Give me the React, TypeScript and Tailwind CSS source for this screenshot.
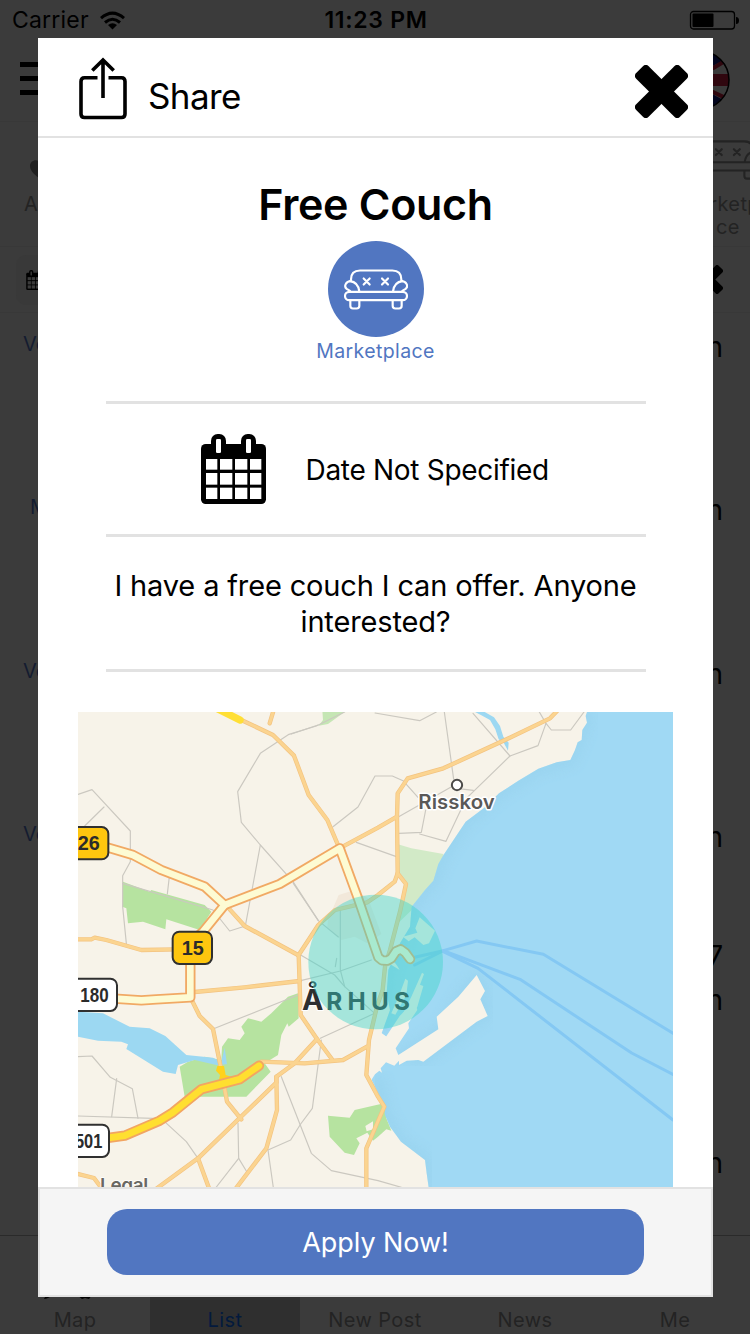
import React from "react";

const ROADS = [
  "490,30 585,75 648,137 692,255 748,330 782,410",
  "575,40 587,0",
  "790,412 900,353 957,320",
  "1440,0 1416,25 1281,90 1096,175 989,205 959,250 957,320 959,490 984,522 966,605 936,720 921,770 914,840 898,885 873,990 865,1095 900,1160 919,1190 895,1245 865,1315 865,1440",
  "959,490 950,515 900,555 868,577 771,600 721,645 662,735 668,915 717,987 762,1048",
  "455,598 500,648 660,735",
  "-5,688 40,688 50,683 85,690 190,720 300,718",
  "350,846 500,832 665,813",
  "340,868 365,918 405,957 430,1080 447,1175 490,1228",
  "550,1055 680,1060 795,1050 867,1010",
  "717,987 650,1060 595,1100 595,1118 360,1345 235,1436",
  "595,1100 597,1200 565,1315 470,1440",
  "360,1345 395,1440",
  "-5,1391 48,1404 75,1440",
];

const LANES = [
  "0,253 42,239 157,363 157,455 134,497 134,590 145,700",
  "78,291 20,348",
  "274,500 268,552",
  "134,520 405,600 455,663 502,648 547,405",
  "800,6 715,48 633,73 547,130 479,245 490,337 547,405 645,515 721,632 781,681",
  "640,72 720,45",
  "765,350 840,291 891,198 943,198 975,212 1020,262",
  "835,397 953,439",
  "891,9 1025,32 1075,6",
  "1099,6 1128,215 1135,235 1186,241",
  "1185,10 1296,138 1165,265 1104,394 1025,372",
  "1296,138 1380,107 1404,40 1384,6",
  "1404,40 1420,60 1478,60 1518,6",
  "1118,232 962,320",
  "1043,300 1030,367 963,370",
  "787,600 787,780 800,830 890,910 727,985",
  "668,735 770,795 800,830",
  "668,812 787,783 880,750",
  "646,520 721,632",
  "405,957 660,855",
  "730,990 703,1195 668,1242 638,1290 570,1320 587,1440",
  "610,1100 700,1330 760,1382 900,1412 970,1432",
  "0,1040 42,1038 97,1102 163,1136 180,1225",
  "116,1106 101,1220",
  "0,1218 250,1226 325,1295 360,1345",
  "480,1240 482,1345 415,1431",
  "482,1345 505,1383",
  "776,745 772,770",
];

const FERRIES = [
  "1010,742 1096,722 1196,693 1396,733 1785,970",
  "1010,765 1096,722 1326,808 1661,1029 1785,1093",
  "1096,725 1200,775 1785,1230",
];

const MOTORWAY = [
  "80,410 165,435 250,480 380,530 440,585 605,522 785,415 840,565 901,742 912,751 928,752 940,745 954,724 968,718 982,728 996,747",
  "440,585 375,665 337,700 337,862 235,868 190,871 110,866",
];

const YELLOW_ROAD = ["80,1285 140,1277 245,1232 285,1207 370,1138 485,1108 543,1067"];

function Lines({ items, color, width }: { items: string[]; color: string; width: number }) {
  return (
    <g fill="none" stroke={color} strokeWidth={width} strokeLinejoin="round" strokeLinecap="round">
      {items.map((p) => (
        <polyline key={p} points={p} />
      ))}
    </g>
  );
}

function Shield({ x, y, w, label, tx, tw, yellow }: { x: number; y: number; w: number; label: string; tx: number; tw: number; yellow?: boolean }) {
  return (
    <g>
      <rect x={x} y={y} width={w} height={97} rx={20} fill={yellow ? "#fec60f" : "#fff"} stroke="#303030" strokeWidth={6} />
      <text x={tx} y={y + 69} textLength={tw} lengthAdjust="spacingAndGlyphs" fontSize={59} fontWeight={700} fill="#2b2b2b" fontFamily="Liberation Sans, sans-serif">
        {label}
      </text>
    </g>
  );
}

function AreaMap() {
  return (
    <svg className="block h-[475px] w-[595px]" viewBox="0 6 1785 1425">
      <defs>
        <filter id="shore" x="-5%" y="-5%" width="110%" height="110%">
          <feGaussianBlur stdDeviation="16" />
        </filter>
        <clipPath id="sea">
          <path d="M1529 0L1523 18L1527 38L1513 60L1511 90L1499 97L1491 120L1477 150L1436 157L1381 176L1321 212L1263 250L1221 292L1163 335L1096 436L1081 462L1066 512L1041 540L1001 590L996 650L966 700L931 780L926 850L936 900L911 970L926 980V1040L870 1080L880 1108L900 1150L919 1190L921 1215L936 1250L969 1295L1041 1350L1046 1390L1053 1440H1800V0Z" />
        </clipPath>
      </defs>
      <rect y="0" width="1785" height="1440" fill="#f7f3e9" />
      <path d="M782 555L830 540L870 565L910 672L868 700L830 680L790 690L748 650L750 630Z" fill="#f2e8da" />
      <g fill="#b6e3a0">
        <path d="M135 515L215 545L220 540L380 585L400 605L365 660L265 628L262 658L195 635L150 640L145 595L133 590Z" />
        <path d="M660 850L662 925L632 950L628 940L610 975L600 1035L560 1060L578 1085L505 1160H320L305 1070L330 1055L380 1040L430 1050L432 1010L450 985L485 990L500 970L490 950L510 925L550 935L580 910L630 860Z" />
        <path fillRule="evenodd" d="M750 1217L815 1223L830 1200L895 1185L920 1180L925 1225L940 1262L925 1258L900 1280L885 1292L868 1268L835 1285L845 1300L828 1335L800 1328L755 1280ZM862 1248L885 1234V1258L866 1264Z" />
        <path d="M733 0H808L750 42L722 47L735 30Z" fill="#c5e6b4" />
        <path d="M960 403L1000 415L1096 432L1100 500L1001 600L960 640L984 522L959 490Z" fill="#d2eac7" />
      </g>
      <g fill="#9cd8f2">
        <path d="M0 905L75 910L155 950L215 955L262 978L325 1035L405 1043L430 1055L440 1013L447 1063L415 1065L350 1050L300 1065L293 1092L255 1085L145 1017L150 1003L130 995L60 992L0 980Z" />
        <path d="M1180 0L1210 16L1236 30L1252 58L1262 88L1278 100L1290 122L1292 98L1276 80L1266 48L1248 22L1220 6Z" />
      </g>
      <g clipPath="url(#sea)">
        <rect y="0" width="1800" height="1440" fill="#a0d9f4" />
        <polyline
          points="1529,0 1513,60 1477,150 1381,176 1263,250 1163,335 1096,436 1066,512 1001,590 966,700 931,780 926,850 911,970"
          fill="none"
          stroke="#93cfea"
          strokeWidth="34"
          opacity=".45"
          filter="url(#shore)"
        />
        <polyline points="900,1100 921,1215 969,1295 1041,1350 1053,1440" fill="none" stroke="#93cfea" strokeWidth="34" opacity=".45" filter="url(#shore)" />
        <path d="M961 1035L1081 958L1141 860L1196 795L1221 843L1229 918L1036 1055Z" fill="#93cfea" stroke="#93cfea" strokeWidth="20" opacity=".45" filter="url(#shore)" />
      </g>
      <g fill="#f7f3e9">
        <path d="M905 965L924 980L965 918L1010 872L1018 900L991 940L993 955L953 1015L961 1035L1081 958L1076 920L1141 860L1196 795L1221 843L1207 868L1229 918L1196 935L1156 965L1036 1055L1021 1050L986 1052L963 1065V1052L949 1067L924 1057L908 1075L912 1088L904 1082L891 1093L880 1110L860 1105L870 970Z" />
        <path d="M1025 622L1071 662L1053 700L1036 705L1010 682L992 694L975 680L1018 668L1012 655Z" />
        <path d="M982 806L962 860L940 910L952 914L985 855L990 812Z" />
        <path d="M1032 788L1000 860L968 925L985 940L1018 890L1036 828L1026 824L1038 792Z" />
        <path d="M925 755L965 780L958 768L940 745Z" />
      </g>
      <Lines items={LANES} color="#cbc8c0" width={3.5} />
      <Lines items={FERRIES} color="#84c8f3" width={9} />
      <Lines items={ROADS} color="#f3c380" width={13} />
      <Lines items={ROADS} color="#fbd490" width={9} />
      <Lines items={["410,-8 486,30"]} color="#ffdf35" width={22} />
      <Lines items={MOTORWAY} color="#f1a964" width={31} />
      <Lines items={MOTORWAY} color="#fdfbd3" width={20} />
      <path d="M418 1068H438L443 1095L475 1105L420 1125L426 1095L414 1082Z" fill="#ffd21c" />
      <Lines items={YELLOW_ROAD} color="#f2a562" width={31} />
      <Lines items={YELLOW_ROAD} color="#ffdf30" width={20} />
      <Shield x={-50} y={351} w={141} label="26" tx={-1} tw={66} yellow />
      <Shield x={284} y={665} w={118} label="15" tx={311} tw={66} yellow />
      <Shield x={-50} y={806} w={167} label="180" tx={7} tw={85} />
      <Shield x={-50} y={1244} w={143} label="501" tx={-9} tw={82} />
      <circle cx="1137" cy="225" r="15.5" fill="#fff" stroke="#4b4947" strokeWidth="6" />
      <g fontFamily="Inter, sans-serif" stroke="#fff" strokeLinejoin="round" paintOrder="stroke">
        <text x="1021" y="297" textLength="229" fontSize="61" fontWeight="600" fill="#5a5958" strokeWidth="9">Risskov</text>
        <text x="66" y="1446" textLength="145" fontSize="57" fontWeight="600" fill="#696763" strokeWidth="4">Legal</text>
        <text x="672" y="899" fontSize="86" fontWeight="700" fill="#2d2e30" strokeWidth="6">Å</text>
        <text x="745" y="899" textLength="251" fontSize="73" fontWeight="700" fill="#26282a" stroke="none">RHUS</text>
      </g>
      <circle cx="893" cy="756" r="202" fill="#41d4ca" fillOpacity=".45" />
    </svg>
  );
}

function Couch({ className }: { className: string }) {
  return (
    <svg className={className} viewBox="462 294 192 122" fill="none" stroke="currentColor" strokeWidth="6.5" strokeLinecap="round" strokeLinejoin="round">
      <path d="M483 328v-3q0-27 27-27h97q27 0 27 27v3" />
      <path d="M483 330c-16 0-22 16-13 23l10 6M480 330c18 2 26 16 28 31M634 330c16 0 22 16 13 23l-10 6M637 330c-18 2-26 16-28 31" />
      <rect x="465" y="362" width="186" height="25" rx="12.5" />
      <path d="M481 389v15q0 8 8 8h11q8 0 8-8v-15M608 389v15q0 8 8 8h11q8 0 8-8v-15" />
      <path d="M521 322l18 18M539 322l-18 18M576 322l18 18M594 322l-18 18" />
    </svg>
  );
}

function Calendar({ className }: { className: string }) {
  const columns = [[48, 34], [90, 37], [135, 37], [180, 34]];
  const rows = [[867, 32], [909, 35], [953, 34]];
  return (
    <svg className={className} viewBox="33 792 195 210">
      <rect x="33" y="822" width="195" height="180" rx="14" />
      <rect x="63" y="792" width="45" height="68" rx="20" />
      <rect x="153" y="792" width="45" height="68" rx="20" />
      <g className="fill-white">
        <rect x="78" y="807" width="15" height="42" rx="4" />
        <rect x="168" y="807" width="15" height="42" rx="4" />
        {rows.map(([y, h]) => columns.map(([x, w]) => <rect key={`${x}-${y}`} x={x} y={y} width={w} height={h} />))}
      </g>
    </svg>
  );
}

function Cross({ className }: { className: string }) {
  return (
    <svg className={className} viewBox="-26.5 -26.5 53 53">
      <rect x="-31" y="-8.8" width="62" height="17.6" rx="4" transform="rotate(45)" />
      <rect x="-31" y="-8.8" width="62" height="17.6" rx="4" transform="rotate(-45)" />
    </svg>
  );
}

function ShareIcon() {
  return (
    <svg className="h-[64px] w-[48px]" viewBox="79 57 48 64" fill="none" stroke="#000" strokeWidth="3.6">
      <path d="M97.500 77.700H84.500Q81 77.700 81 81.500V114Q81 117.500 84.500 117.500H121.500Q125 117.500 125 114V81.500Q125 77.700 121.500 77.700H108.500" />
      <path d="M103 98V60M92.300 70.500L103 60L113.700 70.500" />
    </svg>
  );
}

function Screen() {
  const rows = [
    { left: "Vo", right: "n" },
    { left: "M", right: "n" },
    { left: "Vo", right: "n" },
    { left: "Vo", right: "n" },
    { left: "", right: "n", extra: "7" },
    { left: "", right: "n" },
  ];
  return (
    <div className="flex h-full flex-col bg-[#3b3b3b] text-black">
      <div className="grid h-[40px] grid-cols-3 items-center pr-[11px] pl-[12px] text-[23px]">
        <div className="flex items-center gap-[11px]">
          <span className="tracking-[0.200px]">Carrier</span>
          <svg className="h-[19px] w-[25px]" viewBox="0 0 25 19" fill="none" stroke="#000" strokeWidth="3">
            <path d="M1 7.200Q12.500-3 24 7.200M5 11.500Q12.500 5 20 11.500" />
            <path d="M8 14q4.500-3.500 9 0l-4.500 4.500z" fill="#000" stroke="none" />
          </svg>
        </div>
        <span className="pl-px text-center font-semibold tracking-[0.700px]">11:23 PM</span>
        <svg className="h-[20px] w-[50px] justify-self-end" viewBox="0 0 50 20">
          <rect x="1.500" y="1.500" width="44" height="17.500" rx="3" fill="none" stroke="#000" strokeWidth="1.300" />
          <rect x="3.500" y="3.500" width="21" height="13.500" rx="1" />
          <path d="M47 7q3 0 3 3.500t-3 3.500z" />
        </svg>
      </div>
      <div className="flex h-[82px] items-center justify-between border-b border-[#383838] pr-[20px] pl-[20px]">
        <div className="flex flex-col gap-[9px] pb-[5px]">
          <div className="h-[5px] w-[36px] bg-black" />
          <div className="h-[5px] w-[36px] bg-black" />
          <div className="h-[5px] w-[36px] bg-black" />
        </div>
        <svg className="mb-[2px] h-[60px] w-[60px]" viewBox="0 0 60 60">
          <clipPath id="flag"><circle cx="30" cy="30" r="29" /></clipPath>
          <g clipPath="url(#flag)">
            <rect width="60" height="60" fill="#03061f" />
            <path d="M0 0L60 60M60 0L0 60" stroke="#3b3b3b" strokeWidth="15" transform="translate(-8 10) scale(1.25 .67)" />
            <path d="M60 8L30 26M60 50L30 36" stroke="#30070f" strokeWidth="4" />
            <path d="M30 0V60M0 30H60" stroke="#3b3b3b" strokeWidth="20" />
            <path d="M30 0V60M0 30H60" stroke="#30070f" strokeWidth="12" />
          </g>
          <circle cx="30" cy="30" r="29" fill="none" stroke="#000" strokeWidth="1.500" />
        </svg>
      </div>
      <div className="flex h-[125px] justify-between border-b border-[#383838] text-[20px] leading-[23px] tracking-[0.400px] text-[#232323]">
        <div className="flex flex-col pt-[29px] pl-[24px]">
          <svg className="ml-[6px] h-[32px] w-[32px]" viewBox="0 0 32 32" fill="#1f1f1f">
            <path d="M16 32C5 25 0 20 0 15C0 9 7 7 12 12L16 16L20 12C25 7 32 9 32 15C32 20 27 25 16 32Z" />
          </svg>
          <span className="mt-[10px]">A</span>
        </div>
        <div className="mr-[-28px] flex w-[100px] flex-col items-center pt-[18px]">
          <Couch className="h-[40px] w-[64px]" />
          <span className="mt-[13px]">Marketpla</span>
          <span>ce</span>
        </div>
      </div>
      <div className="flex h-[66px] items-center justify-between border-b border-[#383838] pr-[27px] pl-[16px]">
        <div className="flex h-[50px] w-[100px] items-center rounded-[10px] bg-[#393939] pl-[10px]">
          <Calendar className="h-[20px] w-[19px] [&_g]:fill-[#3b3b3b]" />
        </div>
        <Cross className="h-[29px] w-[29px]" />
      </div>
      <div className="flex flex-1 flex-col">
        {rows.map((row, i) => (
          <div key={i} className="flex h-[163.300px] shrink-0 items-end justify-between pr-[27px] first:h-[52px]">
            <span className={row.left === "M" ? "pb-[9px] pl-[30px] text-[20px] leading-[24px] text-[#141c30]" : "pb-[9px] pl-[23px] text-[20px] leading-[24px] text-[#141c30]"}>
              {row.left}
            </span>
            <div className="flex flex-col items-end text-[28px] leading-[36px]">
              {row.extra && <span className="pb-[8px]">{row.extra}</span>}
              <span>{row.right}</span>
            </div>
          </div>
        ))}
      </div>
      <div className="grid h-[99px] grid-cols-5 border-t border-[#2a2a2a] text-center text-[20px] tracking-[0.400px] text-[#232323]">
        {["Map", "List", "New Post", "News", "Me"].map((label) => (
          <div key={label} className={label === "List" ? "flex flex-col justify-end bg-[#2f2f2f] text-[#031a3d]" : "flex flex-col justify-end"}>
            {label === "Map" && (
              <svg className="ml-[44px] h-[8px] w-[50px]" viewBox="0 0 50 8" fill="#000">
                <path d="M0 7L2 3H8Q6 6 0 7ZM33 3H48L45 7L41 6L38 7Z" />
              </svg>
            )}
            <span className="h-[34px] leading-[41px]">{label}</span>
          </div>
        ))}
      </div>
    </div>
  );
}

export default function App() {
  return (
    <div className="relative h-[1334px] w-[750px] overflow-hidden font-['Inter','Liberation_Sans',sans-serif]">
      <Screen />
      <div className="absolute top-[38px] left-[38px] flex h-[1259px] w-[675px] flex-col bg-white text-black">
        <header className="flex h-[100px] shrink-0 items-start justify-between border-b-2 border-[#e2e2e2] pr-[25px] pl-[41px]">
          <div className="flex pt-[19px]">
            <ShareIcon />
            <span className="mt-[17px] ml-[21px] text-[35px] leading-[44px] tracking-[-0.600px]">Share</span>
          </div>
          <Cross className="mt-[27px] h-[53px] w-[53px]" />
        </header>
        <main className="flex min-h-0 flex-1 flex-col items-center overflow-hidden">
          <h1 className="mt-[39px] text-[43px] leading-[54px] font-semibold tracking-[-0.300px]">Free Couch</h1>
          <div className="mt-[10px] flex h-[96px] w-[96px] items-center justify-center rounded-full bg-[#5176c1] text-white">
            <Couch className="h-[41px] w-[64px]" />
          </div>
          <p className="pt-px text-[19.500px] leading-[26px] tracking-[0.400px] text-[#5176c1]">Marketplace</p>
          <section className="mt-[37px] flex h-[133px] w-[540px] items-center border-t-[3px] border-[#e2e2e2] pl-[95px]">
            <Calendar className="h-[70px] w-[65px]" />
            <span className="ml-[40px] pt-px text-[28px] tracking-[-0.300px]">Date Not Specified</span>
          </section>
          <p className="flex h-[138px] w-[540px] items-center justify-center border-y-[3px] border-[#e2e2e2] pt-[2px] text-center text-[29px] leading-[36px] tracking-[-0.150px]">
            I have a free couch I can offer. Anyone interested?
          </p>
          <div className="mt-[40px] shrink-0">
            <AreaMap />
          </div>
        </main>
        <footer className="flex h-[110px] shrink-0 items-center justify-center border-2 border-[#e2e2e2] bg-[#f5f5f5]">
          <button className="h-[66px] w-[537px] rounded-[20px] bg-[#5176c1] pt-[2px] text-[27px] tracking-[-0.050px] text-white">Apply Now!</button>
        </footer>
      </div>
    </div>
  );
}
